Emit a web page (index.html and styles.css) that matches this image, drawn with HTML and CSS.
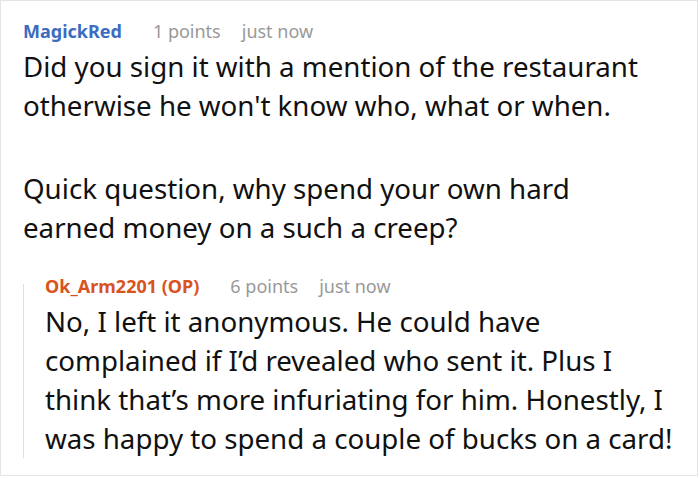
FILE: index.html
```html
<!DOCTYPE html>
<html lang="en">
<head>
    <meta charset="UTF-8">
    <title>Comment thread</title>
    <link rel="stylesheet" href="styles.css">
</head>
<body>
    <div class="thread">
        <div class="comment">
            <div class="meta">
                <span class="author author-blue">MagickRed</span>
                <span class="info">1 points</span>
                <span class="info">just now</span>
            </div>
            <div class="body body-top">
                <p>Did you sign it with a mention of the restaurant otherwise he won't know who, what or when.</p>
                <p>Quick question, why spend your own hard earned money on a such a creep?</p>
            </div>
            <div class="reply">
                <div class="reply-line"></div>
                <div class="reply-content">
                    <div class="meta">
                        <span class="author author-op">Ok_Arm2201 (OP)</span>
                        <span class="info">6 points</span>
                        <span class="info">just now</span>
                    </div>
                    <div class="body">
                        <p>No, I left it anonymous. He could have complained if I’d revealed who sent it. Plus I think that’s more infuriating for him. Honestly, I was happy to spend a couple of bucks on a card!</p>
                    </div>
                </div>
            </div>
        </div>
    </div>
</body>
</html>
```

FILE: styles.css
```css
body {
    margin: 0;
    font-family: "Noto Sans", "Open Sans", sans-serif;
    background: #fff;
}
.thread {
    width: 698px;
    height: 476px;
    box-sizing: border-box;
    border: 1px solid #e4e4e4;
    padding: 14px 16px 0 22px;
}
.meta {
    display: flex;
    gap: 21px;
    font-size: 18px;
    line-height: 32px;
}
.author {
    font-weight: bold;
    margin-right: 10px;
}
.author-blue {
    color: #3b6cc0;
}
.author-op {
    color: #d9531e;
}
.info {
    color: #999;
}
.body {
    font-size: 27.7px;
    line-height: 39px;
    color: #111;
}
.body p {
    margin: 0;
}
.body p + p {
    margin-top: 44px;
}
.body-top {
    max-width: 640px;
}
.reply {
    display: flex;
    margin-top: 23px;
}
.reply-line {
    width: 1px;
    margin: 14px 21px 0 0;
    background: #e0e0e0;
}
.reply-content {
    flex: 1;
}
```
